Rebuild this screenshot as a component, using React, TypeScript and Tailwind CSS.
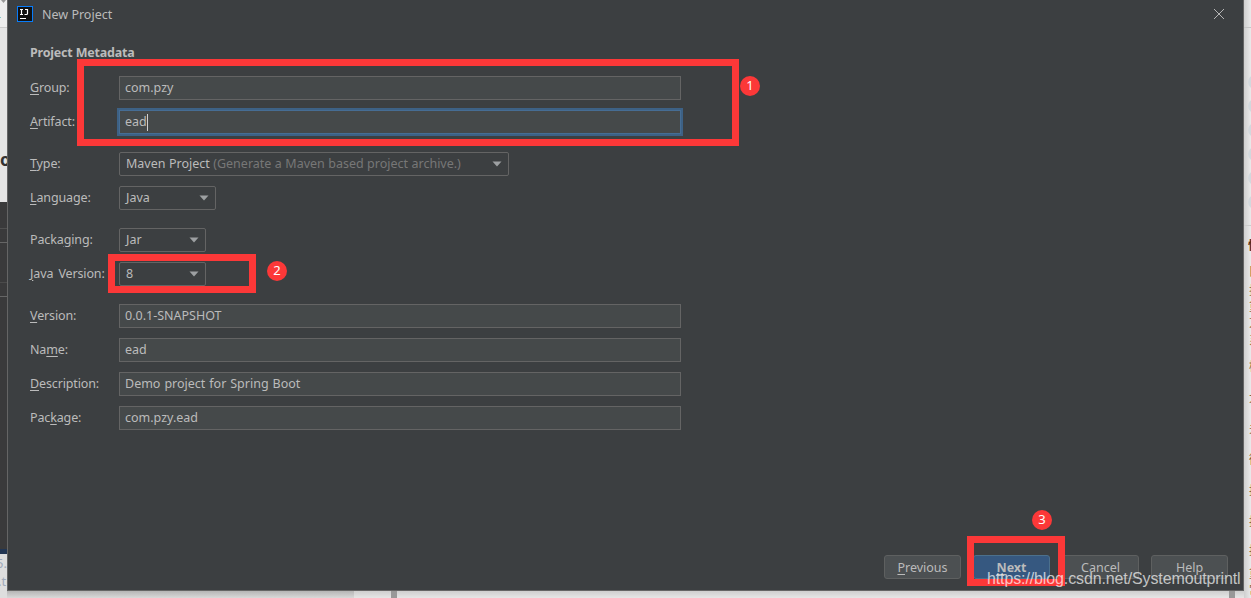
import React from "react";

type LabelProps = { text: string; mnemonic: number };

const Mnemonic: React.FC<LabelProps> = ({ text, mnemonic }) => (
  <>
    {text.slice(0, mnemonic)}
    <span className="underline decoration-1 underline-offset-2">
      {text[mnemonic]}
    </span>
    {text.slice(mnemonic + 1)}
  </>
);

const Row: React.FC<LabelProps & { children: React.ReactNode }> = ({
  text,
  mnemonic,
  children,
}) => (
  <div className="flex h-6 items-center">
    <label className="w-[89px] shrink-0 tracking-[-0.13px] whitespace-nowrap [word-spacing:2px]">
      <Mnemonic text={text} mnemonic={mnemonic} />
    </label>
    {children}
  </div>
);

const Field: React.FC<{ value: string; focused?: boolean }> = ({
  value,
  focused,
}) => (
  <div
    className={
      focused
        ? "flex h-6 w-[562px] items-center border border-[#466d94] bg-[#45494a] pl-[5px] outline-2 outline-[#3d6185]"
        : "flex h-6 w-[562px] items-center border border-[#646464] bg-[#45494a] pl-[5px]"
    }
  >
    <span className="[word-spacing:0.7px]">{value}</span>
    {focused && <span className="h-[17px] w-px bg-[#d0d0d0]" />}
  </div>
);

const Select: React.FC<{ width: string; children: React.ReactNode }> = ({
  width,
  children,
}) => (
  <div
    className={`flex h-6 items-center justify-between rounded-[2px] border border-[#646464] pr-[6px] pl-[6px] ${width}`}
  >
    <span className="whitespace-nowrap [word-spacing:0.2px]">{children}</span>
    <svg width="10" height="6" viewBox="0 0 10 6">
      <path d="M0.5 0.5H9.5L5 5.5Z" fill="#9da0a2" />
    </svg>
  </div>
);

const Button: React.FC<{ primary?: boolean; children: React.ReactNode }> = ({
  primary,
  children,
}) => (
  <button
    className={
      primary
        ? "h-6 w-[77px] rounded-[3px] border border-[#4c708c] bg-[#365880] pt-[2px] font-bold"
        : "h-6 w-[77px] rounded-[3px] border border-[#5e6060] bg-[#4c5052] pt-[2px]"
    }
  >
    {children}
  </button>
);

const Badge: React.FC<{ place: string; children: React.ReactNode }> = ({
  place,
  children,
}) => (
  <div
    className={`absolute flex size-5 items-center justify-center rounded-full bg-[#fc3838] pb-px text-[13px] text-white ${place}`}
  >
    {children}
  </div>
);

// slivers of the page behind the dialog
const sideGlyphs = [
  "快", "口", "技", "重", "方", "系", "榜", "大", "关", "微", "招", "招", "招", "重", "常",
];
const sideHeights = [
  "h-[30px]", "h-[22px]", "h-[16px]", "h-[16px]", "h-[16px]", "h-[20px]", "h-[31px]", "h-[31px]",
  "h-[31px]", "h-[31px]", "h-[31px]", "h-[31px]", "h-[28px]", "h-[17px]", "h-[16px]",
];

const LeftEdge = () => (
  <div className="flex w-[7px] shrink-0 flex-col overflow-hidden bg-[#e5e5e5]">
    <div className="h-[28px] border-b border-[#cccccc] bg-[#ededed]">
      <svg width="7" height="20" viewBox="0 0 7 20">
        <path d="M1 0H6L3.5 3Z" fill="#999999" />
        <path d="M0 17H1V18H0Z" fill="#80c8c8" />
      </svg>
    </div>
    <div className="h-[174px] pt-[122px] text-[17px] leading-5 font-bold text-[#333333]">
      o
    </div>
    <div className="flex h-[347px] flex-col bg-[#3a3a3b]">
      <div className="h-[27px] border-b border-[#505050]" />
      <div className="h-[14px] border-b border-[#666666]" />
      <div className="h-[40px] border-b border-[#4b4b4b]" />
      <div className="h-[14px] border-b border-[#666666]" />
    </div>
    <div className="h-[5px] bg-[#223653]" />
    <div className="h-[44px] bg-[#dedede] text-[13px] leading-[18px] text-[#a0aaba]">
      <div className="-ml-[4px]">5.p</div>
      <div className="-ml-[2px]">.te</div>
    </div>
  </div>
);

const RightEdge = () => (
  <div className="flex w-[7px] shrink-0 flex-col overflow-hidden bg-linear-to-r from-[#cfcfcf] to-[#eaeaea]">
    <div className="h-[28px] border-b border-[#c5c5c5]" />
    <div className="flex h-[198px] flex-col gap-[10px] border-b border-[#cccccc] pt-[47px] pl-1">
      {[0, 1, 2, 3, 4, 5].map((dot) => (
        <div key={dot} className="size-[14px] shrink-0 rounded-full bg-[#d2d8dc]" />
      ))}
    </div>
    <div className="flex flex-col pt-[4px] pl-[5px] font-['Noto_Sans_CJK_SC',sans-serif] text-[12px] text-[#8b6340]">
      {sideGlyphs.map((glyph, i) => (
        <div
          key={i}
          className={`flex shrink-0 items-center ${sideHeights[i]} ${i === 0 ? "-ml-px font-bold text-[#592b18]" : ""}`}
        >
          {glyph}
        </div>
      ))}
    </div>
  </div>
);

const BottomEdge = () => (
  <div className="flex h-[7px] bg-linear-to-b from-[#b5b5b5] to-[#d9d9d9]">
    <div className="w-[347px]" />
    <div className="w-[37px] bg-white/35" />
    <div className="w-[6px] bg-[#989898]" />
    <div className="flex-1 bg-white/35" />
    <div className="w-[6px] bg-[#989898]" />
    <div className="w-[9px] bg-white/35" />
  </div>
);

const App: React.FC = () => {
  return (
    <div className="relative flex h-[598px] w-[1251px] overflow-hidden bg-[#e5e5e5] font-['Noto_Sans','Noto_Sans_CJK_SC',sans-serif] text-[12.5px] leading-none text-[#bbbbbb]">
      <LeftEdge />
      <div className="flex w-[1237px] shrink-0 flex-col">
        <div className="flex h-[591px] flex-col border-x border-b border-[#656565] bg-[#3c3f41]">
          <div className="flex h-7 items-center pr-[18px] pl-[9px]">
            <svg width="16" height="16" viewBox="0 0 16 16">
              <rect x="0.5" y="0.5" width="15" height="15" fill="#111111" stroke="#087cfa" />
              <path
                d="M3 3.5H6M4.5 3.5V8.5M3 8.5H6M8 3.5H10.5V7.5Q10.5 8.5 9.5 8.5H7.5"
                fill="none"
                stroke="#ffffff"
                strokeWidth="1.2"
              />
              <path d="M3 12.5H9" stroke="#ffffff" />
            </svg>
            <span className="ml-[9px] flex-1 pt-[2px]">New Project</span>
            <svg width="12" height="12" viewBox="0 0 12 12">
              <path d="M1 1L11 11M11 1L1 11" stroke="#b5b5b5" />
            </svg>
          </div>
          <div className="flex flex-1 flex-col gap-[18px] pl-[22px]">
            <div className="flex flex-col gap-[10px]">
              <h1 className="flex h-[38px] items-center pt-[12px] font-bold tracking-[-0.2px]">
                Project Metadata
              </h1>
              <Row text="Group:" mnemonic={0}>
                <Field value="com.pzy" />
              </Row>
              <Row text="Artifact:" mnemonic={0}>
                <Field value="ead" focused />
              </Row>
            </div>
            <div className="flex flex-col gap-[10px]">
              <Row text="Type:" mnemonic={0}>
                <Select width="w-[390px]">
                  Maven Project{" "}
                  <span className="text-[#777777]">
                    (Generate a Maven based project archive.)
                  </span>
                </Select>
              </Row>
              <Row text="Language:" mnemonic={0}>
                <Select width="w-[97px]">Java</Select>
              </Row>
            </div>
            <div className="flex flex-col gap-[10px]">
              <Row text="Packaging:" mnemonic={5}>
                <Select width="w-[87px]">Jar</Select>
              </Row>
              <Row text="Java Version:" mnemonic={0}>
                <Select width="w-[87px]">8</Select>
              </Row>
            </div>
            <div className="flex flex-col gap-[10px]">
              <Row text="Version:" mnemonic={0}>
                <Field value="0.0.1-SNAPSHOT" />
              </Row>
              <Row text="Name:" mnemonic={2}>
                <Field value="ead" />
              </Row>
              <Row text="Description:" mnemonic={0}>
                <Field value="Demo project for Spring Boot" />
              </Row>
              <Row text="Package:" mnemonic={3}>
                <Field value="com.pzy.ead" />
              </Row>
            </div>
          </div>
          <div className="flex justify-end gap-3 pr-[15px] pb-[11px]">
            <Button>
              <Mnemonic text="Previous" mnemonic={0} />
            </Button>
            <Button primary>
              <Mnemonic text="Next" mnemonic={0} />
            </Button>
            <Button>Cancel</Button>
            <Button>Help</Button>
          </div>
        </div>
        <BottomEdge />
      </div>
      <RightEdge />

      {/* annotations */}
      <div className="absolute top-[59px] left-[77px] h-[87px] w-[662px] border-[7px] border-[#fc3838]" />
      <div className="absolute top-[254px] left-[108px] h-[39px] w-[148px] border-[7px] border-[#fc3838]" />
      <div className="absolute top-[536px] left-[967px] h-[50px] w-[98px] border-[7px] border-[#fc3838]" />
      <Badge place="top-[76px] left-[740px]">1</Badge>
      <Badge place="top-[261px] left-[267px]">2</Badge>
      <Badge place="top-[510px] left-[1032px]">3</Badge>
      <div className="absolute top-[571px] left-[987px] font-['Liberation_Sans',sans-serif] text-[16px] leading-4 tracking-[-0.12px] whitespace-nowrap text-white/70">
        https://blog.csdn.net/Systemoutprintl
      </div>
    </div>
  );
};

export default App;
